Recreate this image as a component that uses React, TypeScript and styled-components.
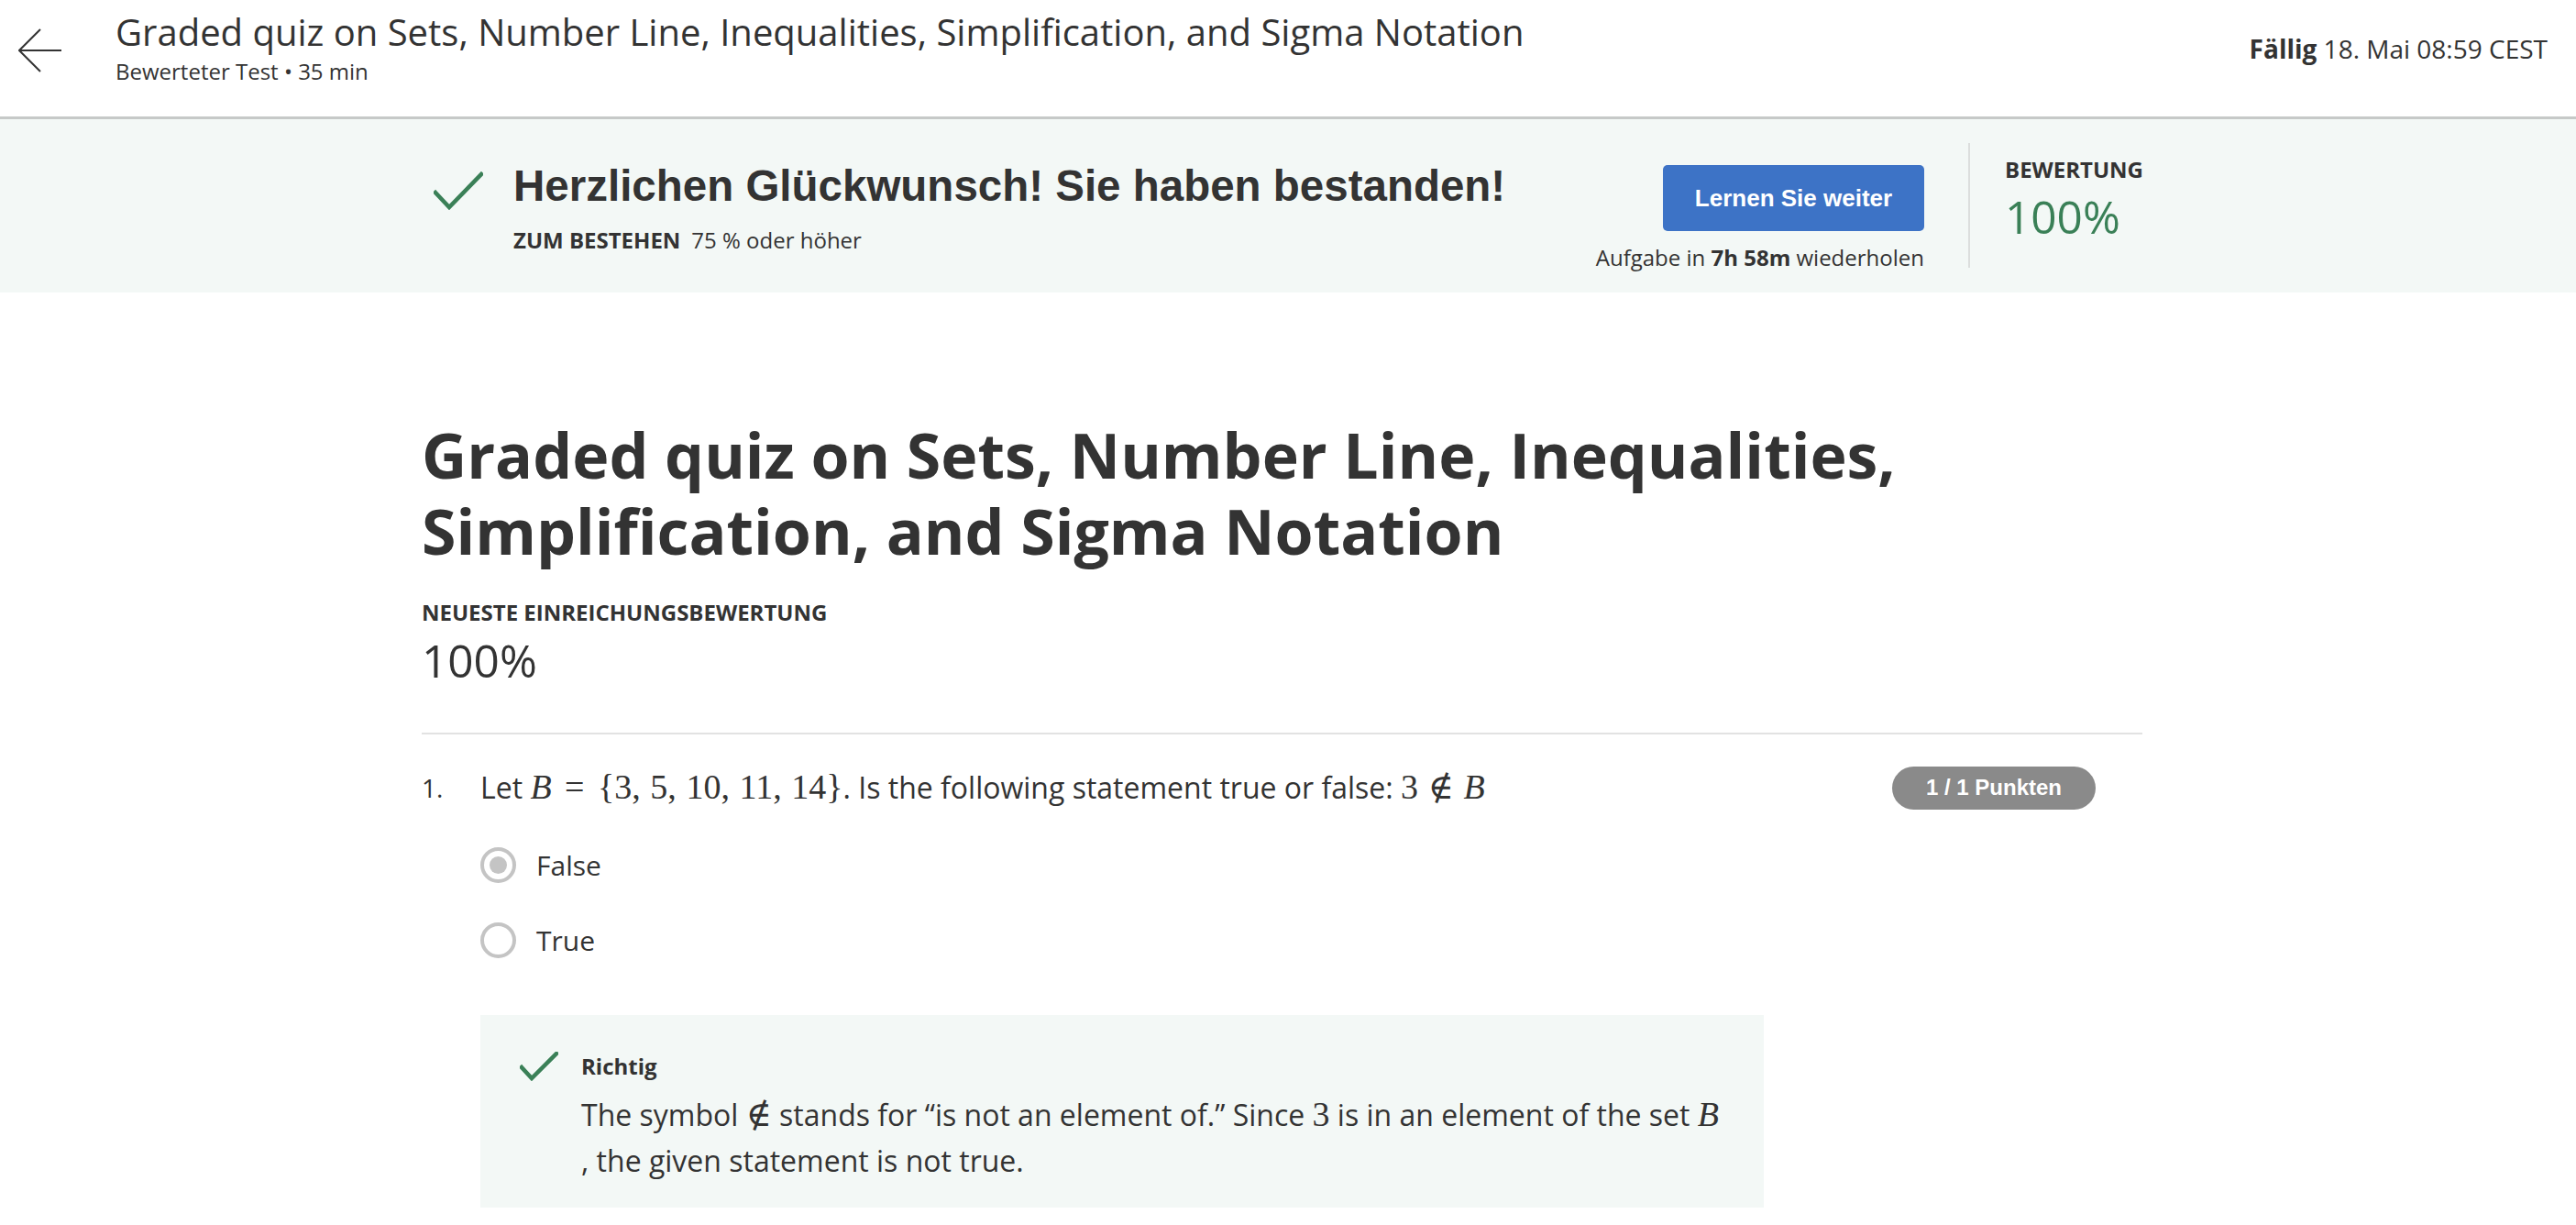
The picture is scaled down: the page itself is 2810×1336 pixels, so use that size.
import React from 'react'
import styled, { createGlobalStyle } from 'styled-components'

const GlobalStyle = createGlobalStyle`
  * {
    box-sizing: border-box;
  }

  body {
    margin: 0;
    background: #fff;
    font-family: 'Open Sans', 'Liberation Sans', sans-serif;
    color: #333;
  }
`

const SContainer = styled.div`
  width: 1877px;
  margin-left: 460px;
`

/* top bar */

const SHeader = styled.header`
  display: flex;
  align-items: flex-start;
  height: 130px;
  padding: 10px 31px 0 20px;
  border-bottom: 3px solid #c6c9c8;
`

const SBackButton = styled.button`
  display: flex;
  margin-top: 21px;
  padding: 0;
  border: 0;
  background: none;
  color: #333;
  cursor: pointer;
`

const STitleBlock = styled.div`
  display: flex;
  flex-direction: column;
  margin-left: 58px;
`

const SHeaderTitle = styled.h1`
  margin: 0;
  font-size: 40px;
  font-weight: 400;
  line-height: 50px;
`

const SHeaderMeta = styled.div`
  margin-top: 3px;
  font-size: 24px;
  line-height: 30px;
`

const SDue = styled.div`
  margin-left: auto;
  margin-top: 23px;
  font-size: 28px;
  line-height: 40px;

  b {
    font-weight: 700;
  }
`

/* passed banner */

const SBanner = styled.section`
  height: 189px;
  background: #f3f8f6;
`

const SBannerInner = styled(SContainer)`
  display: flex;
  height: 100%;
`

const SPassed = styled.div`
  display: flex;
  align-items: flex-start;
  padding-top: 46px;
`

const SPassedIcon = styled.div`
  flex-shrink: 0;
  margin: 11px 33px 0 13px;
`

const SPassedTitle = styled.h2`
  margin: 0;
  font-family: 'Liberation Sans', Arial, sans-serif;
  font-size: 47.5px;
  font-weight: 700;
  line-height: 54px;
`

const SPassingNote = styled.div`
  margin-top: 17px;
  font-size: 24px;
  line-height: 30px;

  b {
    margin-right: 12px;
    font-weight: 700;
  }
`

const SResult = styled.div`
  display: flex;
  align-items: flex-start;
  margin-left: auto;
`

const SAction = styled.div`
  display: flex;
  flex-direction: column;
  align-items: flex-end;
  padding-top: 50px;
`

const SPrimaryButton = styled.button`
  width: 285px;
  height: 72px;
  border: 0;
  border-radius: 5px;
  background: #3d73c6;
  color: #fff;
  font-family: 'Liberation Sans', Arial, sans-serif;
  font-size: 26px;
  font-weight: 700;
  cursor: pointer;
`

const SRetry = styled.div`
  margin-top: 13px;
  font-size: 24px;
  line-height: 32px;

  b {
    font-weight: 700;
  }
`

const SDivider = styled.div`
  width: 2px;
  height: 136px;
  margin: 26px 38px 0 48px;
  background: #dcdedd;
`

const SScore = styled.div`
  display: flex;
  flex-direction: column;
  gap: 10px;
  width: 150px;
  padding-top: 40px;
`

const SLabel = styled.div`
  font-size: 24px;
  font-weight: 700;
  line-height: 30px;
  text-transform: uppercase;
`

const SScoreValue = styled.div`
  font-size: 49.5px;
  line-height: 52px;
  color: #3a8057;
`

/* quiz body */

const SMain = styled(SContainer)`
  padding-top: 135px;
`

const SQuizTitle = styled.h1`
  margin: 0;
  font-size: 68px;
  font-weight: 700;
  line-height: 83px;
`

const SSectionLabel = styled(SLabel)`
  margin-top: 33px;
`

const SGrade = styled.div`
  margin-top: 9px;
  font-size: 49.5px;
  line-height: 56px;
`

const SRule = styled.hr`
  height: 2px;
  margin: 51px 0 0;
  border: 0;
  background: #e2e2e2;
`

const SQuestion = styled.div`
  display: flex;
  align-items: center;
  height: 44px;
  margin-top: 36px;
  padding-right: 51px;
`

const SNumber = styled.span`
  width: 64px;
  font-size: 28px;
`

const SPrompt = styled.div`
  flex: 1;
  font-size: 32px;
  line-height: 44px;
`

const SPoints = styled.span`
  display: flex;
  align-items: center;
  justify-content: center;
  width: 222px;
  height: 47px;
  border-radius: 24px;
  background: #8a8a8a;
  color: #fff;
  font-family: 'Liberation Sans', Arial, sans-serif;
  font-size: 24px;
  font-weight: 700;
`

const SOptions = styled.div`
  display: flex;
  flex-direction: column;
  gap: 22px;
  margin: 32px 0 0 64px;
`

const SOption = styled.label`
  display: flex;
  align-items: center;
  gap: 22px;
  height: 60px;
  font-size: 30px;
`

const SRadio = styled.span<{ $checked?: boolean }>`
  display: flex;
  align-items: center;
  justify-content: center;
  width: 39px;
  height: 39px;
  border: 4px solid #c4c4c4;
  border-radius: 50%;

  &::after {
    content: '';
    width: 19px;
    height: 19px;
    border-radius: 50%;
    background: ${({ $checked }) => ($checked ? '#c4c4c4' : 'transparent')};
  }
`

const SFeedback = styled.div`
  display: flex;
  align-items: flex-start;
  width: 1400px;
  margin: 52px 0 0 64px;
  padding: 40px 20px 26px 43px;
  background: #f3f8f6;
`

const SFeedbackIcon = styled.div`
  flex-shrink: 0;
  margin-right: 25px;
`

const SFeedbackTitle = styled.div`
  font-size: 24px;
  font-weight: 700;
  line-height: 32px;
`

const SExplanation = styled.div`
  margin-top: 12px;
  font-size: 32px;
  line-height: 50px;
  white-space: nowrap;
`

/* math, typeset like the KaTeX output */

const SMath = styled.span`
  font-family: 'Liberation Serif', 'DejaVu Serif', serif;
  font-size: 38px;
  line-height: 1;
  white-space: nowrap;
`

const SVar = styled.i`
  font-style: italic;
`

const SRel = styled.span<{ $wide?: boolean }>`
  margin: 0 ${({ $wide }) => ($wide ? '0.38em' : '0.28em')};
`

const SSep = styled.span`
  margin-right: 0.28em;
`

const Check = ({ width, height, points }: { width: number; height: number; points: string }) => (
  <svg width={width} height={height} viewBox={`0 0 ${width} ${height}`} fill="none" display="block">
    <polyline points={points} stroke="#3a8057" strokeWidth="4.5" strokeLinecap="square" />
  </svg>
)

const SetOfB = () => (
  <SMath>
    <SVar>B</SVar>
    <SRel $wide>=</SRel>
    {'{3,'}
    <SSep />
    {'5,'}
    <SSep />
    {'10,'}
    <SSep />
    {'11,'}
    <SSep />
    {'14}'}
  </SMath>
)

const options = [
  { label: 'False', checked: true },
  { label: 'True', checked: false },
]

export default function App() {
  return (
    <>
      <GlobalStyle />
      <SHeader>
        <SBackButton aria-label="Zurück">
          <svg width="48" height="48" viewBox="0 0 48 48" fill="none" stroke="#333" strokeWidth="2">
            <path d="M47 24H1" />
            <path d="M24 1 1 24l23 23" />
          </svg>
        </SBackButton>
        <STitleBlock>
          <SHeaderTitle>Graded quiz on Sets, Number Line, Inequalities, Simplification, and Sigma Notation</SHeaderTitle>
          <SHeaderMeta>Bewerteter Test • 35 min</SHeaderMeta>
        </STitleBlock>
        <SDue>
          <b>Fällig</b> 18. Mai 08:59 CEST
        </SDue>
      </SHeader>

      <SBanner>
        <SBannerInner>
          <SPassed>
            <SPassedIcon>
              <Check width={54} height={42} points="2,23 17,39 52,3" />
            </SPassedIcon>
            <div>
              <SPassedTitle>Herzlichen Glückwunsch! Sie haben bestanden!</SPassedTitle>
              <SPassingNote>
                <b>ZUM BESTEHEN</b>75 % oder höher
              </SPassingNote>
            </div>
          </SPassed>
          <SResult>
            <SAction>
              <SPrimaryButton>Lernen Sie weiter</SPrimaryButton>
              <SRetry>
                Aufgabe in <b>7h 58m</b> wiederholen
              </SRetry>
            </SAction>
            <SDivider />
            <SScore>
              <SLabel>Bewertung</SLabel>
              <SScoreValue>100%</SScoreValue>
            </SScore>
          </SResult>
        </SBannerInner>
      </SBanner>

      <SMain>
        <SQuizTitle>Graded quiz on Sets, Number Line, Inequalities, Simplification, and Sigma Notation</SQuizTitle>
        <SSectionLabel>Neueste Einreichungsbewertung</SSectionLabel>
        <SGrade>100%</SGrade>
        <SRule />

        <SQuestion>
          <SNumber>1.</SNumber>
          <SPrompt>
            Let <SetOfB />. Is the following statement true or false:{' '}
            <SMath>
              3<SRel>∉</SRel>
              <SVar>B</SVar>
            </SMath>
          </SPrompt>
          <SPoints>1 / 1 Punkten</SPoints>
        </SQuestion>

        <SOptions>
          {options.map((o) => (
            <SOption key={o.label}>
              <SRadio $checked={o.checked} />
              {o.label}
            </SOption>
          ))}
        </SOptions>

        <SFeedback>
          <SFeedbackIcon>
            <Check width={42} height={32} points="2,17 13,29 40,2" />
          </SFeedbackIcon>
          <div>
            <SFeedbackTitle>Richtig</SFeedbackTitle>
            <SExplanation>
              The symbol <SMath>∉</SMath> stands for “is not an element of.” Since <SMath>3</SMath> is in an element of the
              set <SMath><SVar>B</SVar></SMath>
              <br />, the given statement is not true.
            </SExplanation>
          </div>
        </SFeedback>
      </SMain>
    </>
  )
}
